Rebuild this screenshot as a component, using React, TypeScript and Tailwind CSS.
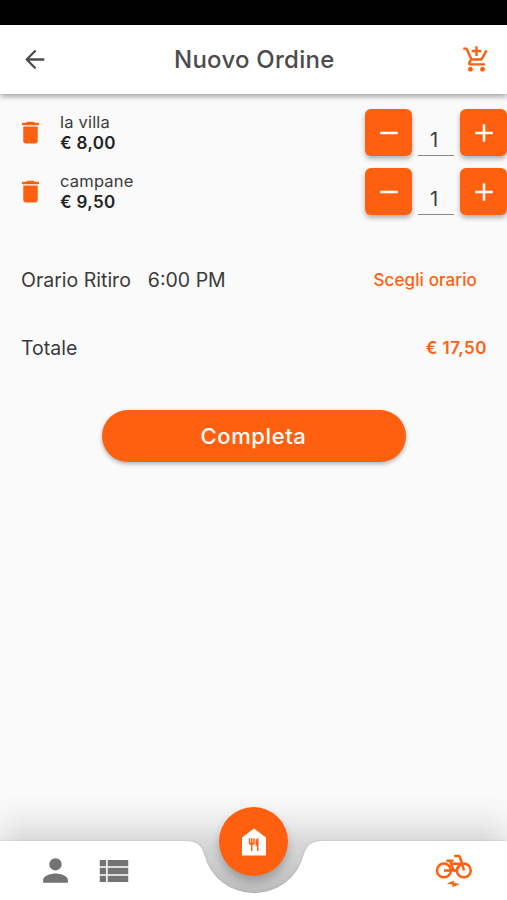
import { useState } from "react";
import {
  MdAdd,
  MdAddShoppingCart,
  MdDelete,
  MdFoodBank,
  MdPerson,
  MdRemove,
  MdViewList,
} from "react-icons/md";

type Item = {
  id: number;
  name: string;
  price: number;
  qty: number;
};

const initialItems: Item[] = [
  { id: 1, name: "la villa", price: 8, qty: 1 },
  { id: 2, name: "campane", price: 9.5, qty: 1 },
];

const euro = (n: number) => "€ " + n.toFixed(2).replace(".", ",");

function BackIcon() {
  return (
    <svg
      viewBox="0 0 20 20"
      className="h-5 w-5"
      fill="none"
      stroke="currentColor"
      strokeWidth="2.3"
      strokeLinecap="round"
      strokeLinejoin="round"
    >
      <path d="M18.4 9.5H2M9.9 1.2L1.7 9.5l8.2 8.3" />
    </svg>
  );
}

function BikeIcon() {
  return (
    <svg
      viewBox="0 0 50 46"
      className="-mt-[3px] ml-auto h-[46px] w-[50px]"
      fill="none"
      stroke="#ff600f"
      strokeWidth="2.5"
      strokeLinejoin="round"
    >
      <circle cx="15.9" cy="24.4" r="6.9" />
      <circle cx="35.8" cy="24.4" r="6.9" />
      {/* Frame, saddle and handlebar */}
      <path d="M15.9 24.4H28.2L32.6 17.8H23.4M18.4 14.7H25.4M22 14.7L25.6 24.4" />
      <path d="M26.2 10H30.4Q31.6 10 32 11.2L36 24.4" />
      <path d="M18.8 37.6L26.3 34.6L25.6 36.8L32 38L24 41.2L24.9 38.7Z" fill="#ff600f" stroke="none" />
    </svg>
  );
}

function QtyButton({ children, label, onClick }: { children: React.ReactNode; label: string; onClick: () => void }) {
  return (
    <button
      aria-label={label}
      onClick={onClick}
      className="flex h-[47px] w-[47px] items-center justify-center rounded-md bg-[#ff600f] text-[30px] text-white shadow-[0_3px_5px_rgba(0,0,0,0.3)]"
    >
      {children}
    </button>
  );
}

function NavBar() {
  return (
    <nav className="relative h-[59px]">
      {/* Soft shade that rises behind the bar and fills the notch */}
      <div className="absolute -top-12 left-0 h-[107px] w-full bg-[linear-gradient(to_bottom,rgba(0,0,0,0)_0px,rgba(0,0,0,0.02)_14px,rgba(0,0,0,0.06)_30px,rgba(0,0,0,0.13)_48px,rgba(0,0,0,0.25)_100px)] [mask-image:linear-gradient(to_right,rgba(0,0,0,0.55),#000_24px,#000_483px,rgba(0,0,0,0.55))]" />
      {/* Bar with the notch around the floating button */}
      <svg viewBox="0 0 507 59" className="absolute inset-0 h-full w-full drop-shadow-[0_0_1px_rgba(0,0,0,0.15)]">
        <path
          fill="#fff"
          d="M0 0H184C197 0 201 4 204 13A51.5 51.5 0 0 0 304 13C307 4 311 0 324 0H507V59H0Z"
        />
      </svg>
      <div className="relative flex h-full items-center pr-[29px] pl-[37px] text-[#737373]">
        <MdPerson className="h-[37px] w-[37px]" />
        <MdViewList className="ml-[21px] h-[38px] w-[38px]" />
        <BikeIcon />
      </div>
      <button
        aria-label="Home"
        className="absolute -top-[34px] left-[219px] flex h-[69px] w-[69px] items-center justify-center rounded-full bg-[#ff600f] text-white shadow-[0_5px_9px_rgba(0,0,0,0.22)]"
      >
        <MdFoodBank className="h-9 w-9" />
      </button>
    </nav>
  );
}

export default function App() {
  const [items, setItems] = useState(initialItems);

  const changeQty = (id: number, delta: number) => {
    setItems(items.map((it) => (it.id === id ? { ...it, qty: Math.max(1, it.qty + delta) } : it)));
  };

  const total = items.reduce((sum, it) => sum + it.price * it.qty, 0);

  return (
    <div className="flex h-[900px] w-[507px] flex-col overflow-hidden bg-[#fafafa] font-[Inter,sans-serif] text-[#3a3a3a]">
      <div className="h-[25px] bg-black" />

      {/* Header */}
      <header className="z-10 flex h-[69px] items-center bg-white pr-4 pl-[25px] text-[#4c4c4c] shadow-[0_2px_6px_rgba(0,0,0,0.4)]">
        <button aria-label="Indietro" className="w-8">
          <BackIcon />
        </button>
        <h1 className="ml-[117px] flex-1 text-2xl font-medium tracking-[0.25px]">Nuovo Ordine</h1>
        <MdAddShoppingCart className="h-[29px] w-[29px] text-[#ff600f]" />
      </header>

      <main className="flex-1">
        {/* Items */}
        <ul className="pt-[15px]">
          {items.map((item) => (
            <li key={item.id} className="mb-3 flex h-[47px] items-center pl-4">
              <button aria-label="Elimina" onClick={() => setItems(items.filter((it) => it.id !== item.id))}>
                <MdDelete className="h-[29px] w-[29px] text-[#ff600f]" />
              </button>
              <div className="ml-[15px] flex-1 leading-[21px]">
                <p className="text-[16.5px] tracking-[0.2px]">{item.name}</p>
                <p className="text-[17px] font-semibold tracking-[0.35px] text-[#222]">{euro(item.price)}</p>
              </div>
              <QtyButton label="Meno" onClick={() => changeQty(item.id, -1)}>
                <MdRemove />
              </QtyButton>
              <div className="mx-1.5 flex h-full w-9 items-end justify-center border-b border-[#888] pr-1 pb-[3px] text-xl leading-6">
                {item.qty}
              </div>
              <QtyButton label="Più" onClick={() => changeQty(item.id, 1)}>
                <MdAdd />
              </QtyButton>
            </li>
          ))}
        </ul>

        {/* Pickup time */}
        <div className="mt-[51px] flex items-center pr-[30px] pl-[21px] text-[19.5px] leading-7">
          <span>Orario Ritiro</span>
          <span className="ml-[17px]">6:00 PM</span>
          <button className="ml-auto text-[17px] font-medium tracking-[0.1px] text-[#ff600f]">Scegli orario</button>
        </div>

        {/* Total */}
        <div className="mt-10 flex items-center justify-between pr-5 pl-[21px] text-[19.5px] leading-7">
          <span>Totale</span>
          <span className="text-[17px] font-semibold tracking-[0.5px] text-[#ff600f]">{euro(total)}</span>
        </div>

        <button className="mx-auto mt-12 block h-[52px] w-[304px] rounded-full bg-[#ff600f] text-[22px] font-medium tracking-[0.6px] text-white shadow-[0_2px_4px_rgba(0,0,0,0.3)]">
          Completa
        </button>
      </main>

      <NavBar />
    </div>
  );
}
